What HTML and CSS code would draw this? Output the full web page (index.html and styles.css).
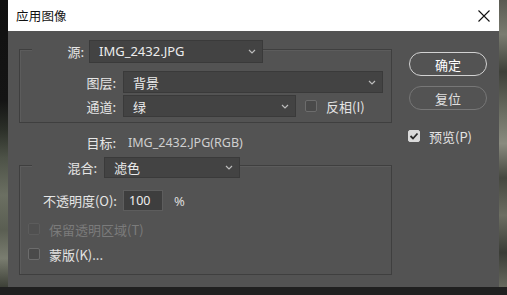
FILE: index.html
```html
<!DOCTYPE html>
<html lang="zh">
<head>
<meta charset="utf-8">
<title>应用图像</title>
<link rel="stylesheet" href="styles.css">
</head>
<body>
<div class="screen">
  <div class="stage">
    <div class="strip strip-left"></div>
    <div class="dialog">
      <div class="titlebar">
        <span class="title">应用图像</span>
        <svg class="close" width="12" height="12" viewBox="0 0 12 12"><path d="M0.5 0.5L11.5 11.5M11.5 0.5L0.5 11.5" stroke="#111" stroke-width="1.1" fill="none"/></svg>
      </div>
      <div class="body">
        <div class="main">
          <div class="group g1">
            <div class="legend legend-src">
              <span class="lbl lbl-src">源:</span>
              <div class="select s-src"><span>IMG_2432.JPG</span><svg class="chev" width="8" height="5" viewBox="0 0 8 5"><path d="M1 1L4 4L7 1" stroke="#bcbcbc" stroke-width="1.2" fill="none"/></svg></div>
            </div>
            <div class="row r-layer">
              <span class="lbl lbl-main">图层:</span>
              <div class="select s-layer"><span>背景</span><svg class="chev" width="8" height="5" viewBox="0 0 8 5"><path d="M1 1L4 4L7 1" stroke="#bcbcbc" stroke-width="1.2" fill="none"/></svg></div>
            </div>
            <div class="row r-chan">
              <span class="lbl lbl-main">通道:</span>
              <div class="select s-chan"><span>绿</span><svg class="chev" width="8" height="5" viewBox="0 0 8 5"><path d="M1 1L4 4L7 1" stroke="#bcbcbc" stroke-width="1.2" fill="none"/></svg></div>
              <div class="check check-inv"><span class="box"></span><span>反相(I)</span></div>
            </div>
          </div>
          <div class="row r-target">
            <span class="lbl lbl-target">目标:</span>
            <span class="val">IMG_2432.JPG(RGB)</span>
          </div>
          <div class="group g2">
            <div class="legend legend-blend">
              <span class="lbl lbl-blend">混合:</span>
              <div class="select s-blend"><span>滤色</span><svg class="chev" width="8" height="5" viewBox="0 0 8 5"><path d="M1 1L4 4L7 1" stroke="#bcbcbc" stroke-width="1.2" fill="none"/></svg></div>
            </div>
            <div class="row r-op">
              <span class="lbl lbl-op">不透明度(O):</span>
              <div class="input">100</div>
              <span class="pct">%</span>
            </div>
            <div class="check check-row disabled r-keep"><span class="box"></span><span>保留透明区域(T)</span></div>
            <div class="check check-row r-mask"><span class="box"></span><span>蒙版(K)...</span></div>
          </div>
        </div>
        <div class="side">
          <div class="btn btn-ok">确定</div>
          <div class="btn btn-reset">复位</div>
          <div class="check check-preview"><span class="box checked"><svg width="10" height="8" viewBox="0 0 10 8"><path d="M1.5 4L4 6.5L8.5 1.5" stroke="#2a2a2a" stroke-width="1.8" fill="none"/></svg></span><span>预览(P)</span></div>
        </div>
      </div>
    </div>
    <div class="strip strip-right"></div>
  </div>
  <div class="bottom"></div>
</div>
</body>
</html>
```

FILE: styles.css
```css
* { box-sizing: border-box; }
html, body { margin: 0; padding: 0; }
body {
  background: #1f1f1f;
  font-family: "Noto Sans CJK SC", "Noto Sans", sans-serif;
  font-size: 13px;
  color: #e4e4e4;
}
.screen { width: 507px; height: 295px; display: flex; flex-direction: column; overflow: hidden; }
.stage { display: flex; height: 287px; }
.strip { width: 8px; flex: none; }
.strip-left {
  background: linear-gradient(180deg, #111 0%, #141414 35%, #2b2f28 45%, #4d5247 55%, #6b6f62 68%, #5a5e52 80%, #7a7d70 90%, #3d4037 100%);
}
.strip-right {
  background: linear-gradient(180deg, #5a5a52 0%, #7a7c70 12%, #3e4039 25%, #6d7064 40%, #8a8b7f 50%, #45473f 62%, #6c6e62 75%, #3a3c36 88%, #686a5f 100%);
}
.bottom { height: 8px; background: #202020; }

.dialog { width: 491px; background: #535353; display: flex; flex-direction: column; }
.titlebar {
  height: 31px; background: #fff; display: flex; align-items: center;
  justify-content: space-between; padding: 0 9px 1px 8px;
}
.title { font-size: 12.5px; color: #111; letter-spacing: 0.2px; }
.close { display: block; margin-top: 1px; }

.body { display: flex; align-items: flex-start; }
.main { width: 384px; padding-left: 11px; }

.group {
  border: 1px solid #3f3f3f;
  box-shadow: inset 1px 1px 0 #5c5c5c;
  width: 373px;
}
.g1 { margin-top: 18px; height: 74px; }
.g2 { margin-top: 15px; height: 110px; }

.legend { display: flex; align-items: center; background: #535353; margin-left: 12px; }
.legend-src { margin-top: -10px; width: 231px; height: 23px; }
.legend-blend { margin-top: -9px; width: 208px; height: 21px; }

.row { display: flex; align-items: center; }
.lbl { text-align: right; white-space: nowrap; color: #e6e6e6; }
.lbl-src { width: 52px; margin-right: 5px; }
.lbl-blend { width: 65px; margin-right: 7px; }
.lbl-main { width: 96px; margin-right: 7px; }
.lbl-target { width: 97px; margin-right: 12px; }
.lbl-op { width: 97px; margin-right: 6px; }

.select {
  display: flex; align-items: center; justify-content: space-between;
  background: #434343; border: 1px solid #3a3a3a;
  padding: 0 6px 0 9px; color: #ececec;
}
.select span { line-height: 1; }
.chev { display: block; }
.s-src { width: 174px; height: 23px; font-family: "Noto Sans", sans-serif; font-size: 13px; }
.s-layer { width: 260px; height: 22px; }
.s-chan { width: 173px; height: 22px; }
.s-blend { width: 136px; height: 21px; }

.r-layer { margin-top: 8px; height: 22px; }
.r-chan { margin-top: 2px; height: 22px; }
.r-target { margin-top: 11px; height: 16px; }
.val { font-family: "Noto Sans", sans-serif; color: #cfcfcf; font-size: 12.5px; }
.r-op { margin-top: 12px; height: 21px; }
.input {
  width: 40px; height: 21px; background: #3e3e3e; border: 1px solid #5d5d5d;
  padding-left: 5px; display: flex; align-items: center;
  font-family: "Noto Sans", sans-serif; color: #eee; font-size: 12.5px;
}
.pct { margin-left: 11px; font-family: "Noto Sans", sans-serif; color: #dcdcdc; }

.check { display: flex; align-items: center; white-space: nowrap; }
.box {
  width: 12px; height: 12px; border: 1px solid #6c6c6c; border-radius: 2px;
  background: #4a4a4a; margin-right: 9px; flex: none;
  display: flex; align-items: center; justify-content: center;
}
.check-inv { margin-left: 9px; }
.check-inv .box { margin-right: 9px; }
.check-row { padding-left: 8px; height: 16px; }
.r-keep { margin-top: 10px; }
.r-mask { margin-top: 9px; }
.disabled { color: #7b7b7b; }
.disabled .box { border-color: #5c5c5c; background: #505050; }

.side { margin-left: 17px; padding-top: 21px; display: flex; flex-direction: column; }
.btn {
  width: 78px; height: 24px; border-radius: 12px; display: flex;
  align-items: center; justify-content: center; font-size: 13px;
}
.btn-ok { border: 1.5px solid #d2d2d2; color: #fff; }
.btn-reset { margin-top: 10px; border: 1.5px solid #777; color: #e0e0e0; }
.check-preview { margin-top: 18px; margin-left: -1px; height: 16px; }
.box.checked { background: #dadada; border-color: #dadada; }
.box.checked svg { display: block; }
```
